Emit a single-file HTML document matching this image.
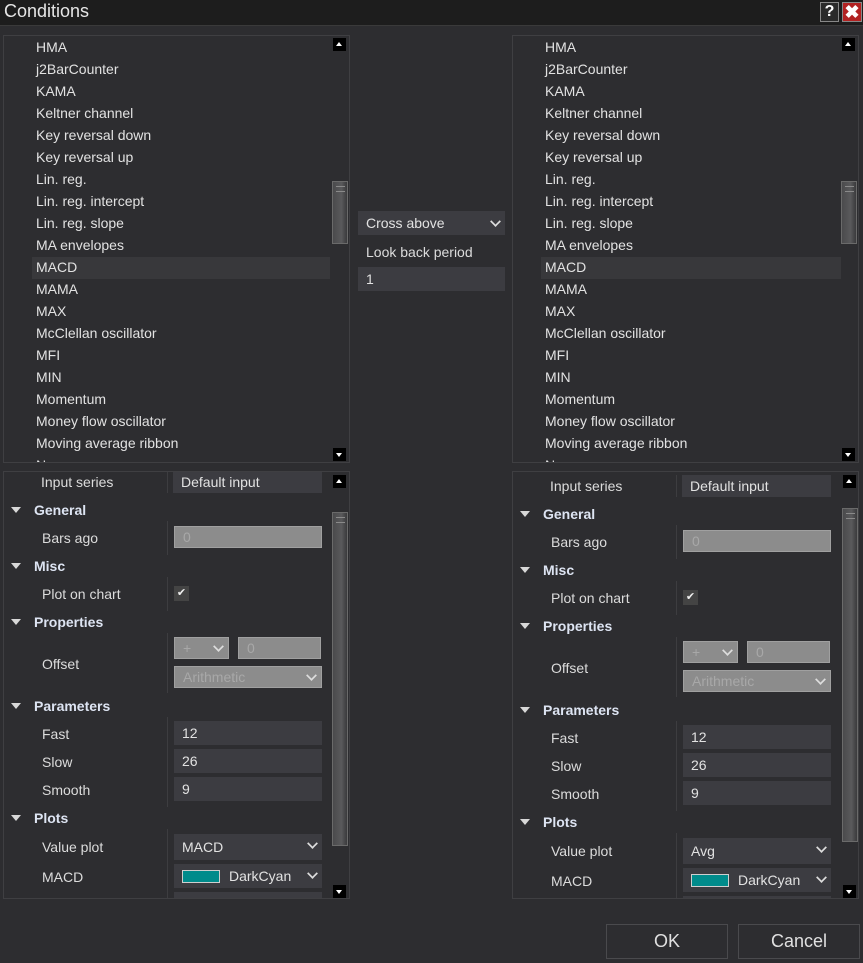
<!DOCTYPE html>
<html><head><meta charset="utf-8"><style>
*{box-sizing:border-box;margin:0;padding:0}
body{width:863px;height:963px;background:#2d2d30;font-family:"Liberation Sans",sans-serif;font-size:14px;color:#e2e2e2;position:relative;overflow:hidden}
.a{position:absolute}
.title{left:0;top:0;width:863px;height:26px;background:#1d1d1d;border-bottom:1px solid #3a3a3a}
.title span{position:absolute;left:4px;top:1px;font-size:18px;color:#e6e6e6}
.box{border:1px solid #3f3f42;background:#2d2d30;overflow:hidden}
.list div{position:absolute;left:32px;height:22px;line-height:20px;white-space:nowrap}
.arr{width:13px;height:13px;background:#000}
.up:after,.dn:after{content:"";position:absolute;left:3px;border-left:3.5px solid transparent;border-right:3.5px solid transparent}
.up:after{top:4px;border-bottom:4px solid #fff}
.dn:after{top:5px;border-top:4px solid #fff}
.thumb{width:16px;border:1px solid #6a6a6a;background:linear-gradient(90deg,#4a4a4c,#5a5a5c 60%,#3a3a3c)}
.thumb:before{content:"";position:absolute;left:3px;top:4px;width:9px;height:4px;border-top:1px solid #8a8a8a;border-bottom:1px solid #8a8a8a}
.lbl{position:absolute;height:20px;line-height:20px;white-space:nowrap;color:#dcdcdc}
.hdr{position:absolute;height:20px;line-height:20px;font-weight:bold;color:#dde4f2}
.tri{position:absolute;width:0;height:0;border-left:5px solid transparent;border-right:5px solid transparent;border-top:6px solid #d8d8d8}
.val{position:absolute;background:#3c3c41;color:#e2e2e2;padding-left:8px;line-height:24px;height:24px;white-space:nowrap}
.dis{background:#8c8c8c;border:1px solid #a0a0a0;color:#a8a8a8;line-height:20px}
.chev{position:absolute;right:5px;top:5px;width:9px;height:9px;border-right:2.5px solid #ddd;border-bottom:2.5px solid #ddd;transform:rotate(45deg) scale(.85)}
.vl{position:absolute;width:1px;background:#3d3d40}
.btn{border:1px solid #4a4a4d;background:#2d2d30;text-align:center;line-height:33px;font-size:18px;color:#e0e0e0}
.sw{position:absolute;left:8px;top:6px;width:38px;height:13px;background:#008b8b;border:1px solid #cfcfcf}
</style></head><body>
<div class="a title"><span>Conditions</span>
<div class="a" style="left:820px;top:2px;width:19px;height:20px;background:#2a2a2a;border:1px solid #888;color:#fff;font-weight:bold;font-size:16px;text-align:center;line-height:18px">?</div>
<div class="a" style="left:842px;top:2px;width:20px;height:20px;background:#b22222;border:1px solid #888;color:#fff;font-weight:bold;font-size:18px;text-align:center;line-height:18px">✖</div>
</div>

<div class="a box list" style="left:3px;top:35px;width:347px;height:428px">
<div class="a" style="left:28px;top:221px;width:298px;height:22px;background:#38383b"></div>
<div style="top:1px">HMA</div><div style="top:23px">j2BarCounter</div><div style="top:45px">KAMA</div><div style="top:67px">Keltner channel</div><div style="top:89px">Key reversal down</div><div style="top:111px">Key reversal up</div><div style="top:133px">Lin. reg.</div><div style="top:155px">Lin. reg. intercept</div><div style="top:177px">Lin. reg. slope</div><div style="top:199px">MA envelopes</div><div style="top:221px">MACD</div><div style="top:243px">MAMA</div><div style="top:265px">MAX</div><div style="top:287px">McClellan oscillator</div><div style="top:309px">MFI</div><div style="top:331px">MIN</div><div style="top:353px">Momentum</div><div style="top:375px">Money flow oscillator</div><div style="top:397px">Moving average ribbon</div><div style="top:419px">N...</div>
<span class="a arr up" style="left:329px;top:2px"></span>
<span class="a thumb" style="left:328px;top:145px;height:63px"></span>
<span class="a arr dn" style="left:329px;top:412px"></span>
</div>

<div class="a box list" style="left:512px;top:35px;width:347px;height:428px">
<div class="a" style="left:28px;top:221px;width:300px;height:22px;background:#38383b"></div>
<div style="top:1px">HMA</div><div style="top:23px">j2BarCounter</div><div style="top:45px">KAMA</div><div style="top:67px">Keltner channel</div><div style="top:89px">Key reversal down</div><div style="top:111px">Key reversal up</div><div style="top:133px">Lin. reg.</div><div style="top:155px">Lin. reg. intercept</div><div style="top:177px">Lin. reg. slope</div><div style="top:199px">MA envelopes</div><div style="top:221px">MACD</div><div style="top:243px">MAMA</div><div style="top:265px">MAX</div><div style="top:287px">McClellan oscillator</div><div style="top:309px">MFI</div><div style="top:331px">MIN</div><div style="top:353px">Momentum</div><div style="top:375px">Money flow oscillator</div><div style="top:397px">Moving average ribbon</div><div style="top:419px">N...</div>
<span class="a arr up" style="left:329px;top:2px"></span>
<span class="a thumb" style="left:328px;top:145px;height:63px"></span>
<span class="a arr dn" style="left:329px;top:412px"></span>
</div>

<div class="val" style="left:358px;top:211px;width:147px">Cross above<span class="chev" style="top:6px"></span></div>
<div class="lbl" style="left:366px;top:242px">Look back period</div>
<div class="val" style="left:358px;top:267px;width:147px">1</div>

<div class="a box" style="left:3px;top:471px;width:347px;height:428px">
<div style="position:absolute;left:-1px;top:-1px;width:347px;height:428px">
<div class="vl" style="left:164px;top:0;height:22px"></div>
<div class="lbl" style="left:38px;top:1px">Input series</div>
<div class="val" style="left:170px;top:0;width:149px;height:22px;line-height:22px">Default input</div>
<span class="tri" style="left:8px;top:36px"></span><div class="hdr" style="left:31px;top:29px">General</div>
<div class="vl" style="left:164px;top:50px;height:34px"></div>
<div class="lbl" style="left:39px;top:57px">Bars ago</div>
<div class="val dis" style="left:171px;top:55px;width:148px;height:22px">0</div>
<span class="tri" style="left:8px;top:92px"></span><div class="hdr" style="left:31px;top:85px">Misc</div>
<div class="vl" style="left:164px;top:106px;height:34px"></div>
<div class="lbl" style="left:39px;top:113px">Plot on chart</div>
<div class="a" style="left:171px;top:115px;width:15px;height:15px;background:#444;color:#eee;font-size:11px;text-align:center;line-height:15px">✔</div>
<span class="tri" style="left:8px;top:148px"></span><div class="hdr" style="left:31px;top:141px">Properties</div>
<div class="vl" style="left:164px;top:162px;height:60px"></div>
<div class="lbl" style="left:39px;top:183px">Offset</div>
<div class="val dis" style="left:171px;top:166px;width:55px;height:22px">+<span class="chev" style="top:4px"></span></div>
<div class="val dis" style="left:235px;top:166px;width:83px;height:22px">0</div>
<div class="val dis" style="left:171px;top:195px;width:148px;height:22px">Arithmetic<span class="chev" style="top:4px"></span></div>
<span class="tri" style="left:8px;top:232px"></span><div class="hdr" style="left:31px;top:225px">Parameters</div>
<div class="vl" style="left:164px;top:246px;height:90px"></div>
<div class="lbl" style="left:39px;top:253px">Fast</div><div class="val" style="left:171px;top:250px;width:148px">12</div>
<div class="lbl" style="left:39px;top:281px">Slow</div><div class="val" style="left:171px;top:278px;width:148px">26</div>
<div class="lbl" style="left:39px;top:309px">Smooth</div><div class="val" style="left:171px;top:306px;width:148px">9</div>
<span class="tri" style="left:8px;top:344px"></span><div class="hdr" style="left:31px;top:337px">Plots</div>
<div class="vl" style="left:164px;top:358px;height:70px"></div>
<div class="lbl" style="left:39px;top:366px">Value plot</div><div class="val" style="left:171px;top:363px;width:148px;height:26px;line-height:26px">MACD<span class="chev"></span></div>
<div class="lbl" style="left:39px;top:396px">MACD</div><div class="val" style="left:171px;top:393px;width:148px;height:24px;padding-left:55px"><span class="sw"></span>DarkCyan<span class="chev"></span></div>
<div class="val" style="left:171px;top:421px;width:148px"></div>
</div>
<span class="a arr up" style="left:329px;top:3px"></span>
<span class="a thumb" style="left:328px;top:40px;height:334px"></span>
<span class="a arr dn" style="left:329px;top:413px"></span>
</div>

<div class="a box" style="left:512px;top:471px;width:347px;height:428px">
<div style="position:absolute;left:-1px;top:3px;width:347px;height:428px">
<div class="vl" style="left:164px;top:0;height:22px"></div>
<div class="lbl" style="left:38px;top:1px">Input series</div>
<div class="val" style="left:170px;top:0;width:149px;height:22px;line-height:22px">Default input</div>
<span class="tri" style="left:8px;top:36px"></span><div class="hdr" style="left:31px;top:29px">General</div>
<div class="vl" style="left:164px;top:50px;height:34px"></div>
<div class="lbl" style="left:39px;top:57px">Bars ago</div>
<div class="val dis" style="left:171px;top:55px;width:148px;height:22px">0</div>
<span class="tri" style="left:8px;top:92px"></span><div class="hdr" style="left:31px;top:85px">Misc</div>
<div class="vl" style="left:164px;top:106px;height:34px"></div>
<div class="lbl" style="left:39px;top:113px">Plot on chart</div>
<div class="a" style="left:171px;top:115px;width:15px;height:15px;background:#444;color:#eee;font-size:11px;text-align:center;line-height:15px">✔</div>
<span class="tri" style="left:8px;top:148px"></span><div class="hdr" style="left:31px;top:141px">Properties</div>
<div class="vl" style="left:164px;top:162px;height:60px"></div>
<div class="lbl" style="left:39px;top:183px">Offset</div>
<div class="val dis" style="left:171px;top:166px;width:55px;height:22px">+<span class="chev" style="top:4px"></span></div>
<div class="val dis" style="left:235px;top:166px;width:83px;height:22px">0</div>
<div class="val dis" style="left:171px;top:195px;width:148px;height:22px">Arithmetic<span class="chev" style="top:4px"></span></div>
<span class="tri" style="left:8px;top:232px"></span><div class="hdr" style="left:31px;top:225px">Parameters</div>
<div class="vl" style="left:164px;top:246px;height:90px"></div>
<div class="lbl" style="left:39px;top:253px">Fast</div><div class="val" style="left:171px;top:250px;width:148px">12</div>
<div class="lbl" style="left:39px;top:281px">Slow</div><div class="val" style="left:171px;top:278px;width:148px">26</div>
<div class="lbl" style="left:39px;top:309px">Smooth</div><div class="val" style="left:171px;top:306px;width:148px">9</div>
<span class="tri" style="left:8px;top:344px"></span><div class="hdr" style="left:31px;top:337px">Plots</div>
<div class="vl" style="left:164px;top:358px;height:70px"></div>
<div class="lbl" style="left:39px;top:366px">Value plot</div><div class="val" style="left:171px;top:363px;width:148px;height:26px;line-height:26px">Avg<span class="chev"></span></div>
<div class="lbl" style="left:39px;top:396px">MACD</div><div class="val" style="left:171px;top:393px;width:148px;height:24px;padding-left:55px"><span class="sw"></span>DarkCyan<span class="chev"></span></div>
<div class="val" style="left:171px;top:421px;width:148px"></div>
</div>
<span class="a arr up" style="left:330px;top:3px"></span>
<span class="a thumb" style="left:329px;top:36px;height:334px"></span>
<span class="a arr dn" style="left:330px;top:413px"></span>
</div>

<div class="a btn" style="left:606px;top:924px;width:122px;height:35px">OK</div>
<div class="a btn" style="left:738px;top:924px;width:122px;height:35px">Cancel</div>
</body></html>
